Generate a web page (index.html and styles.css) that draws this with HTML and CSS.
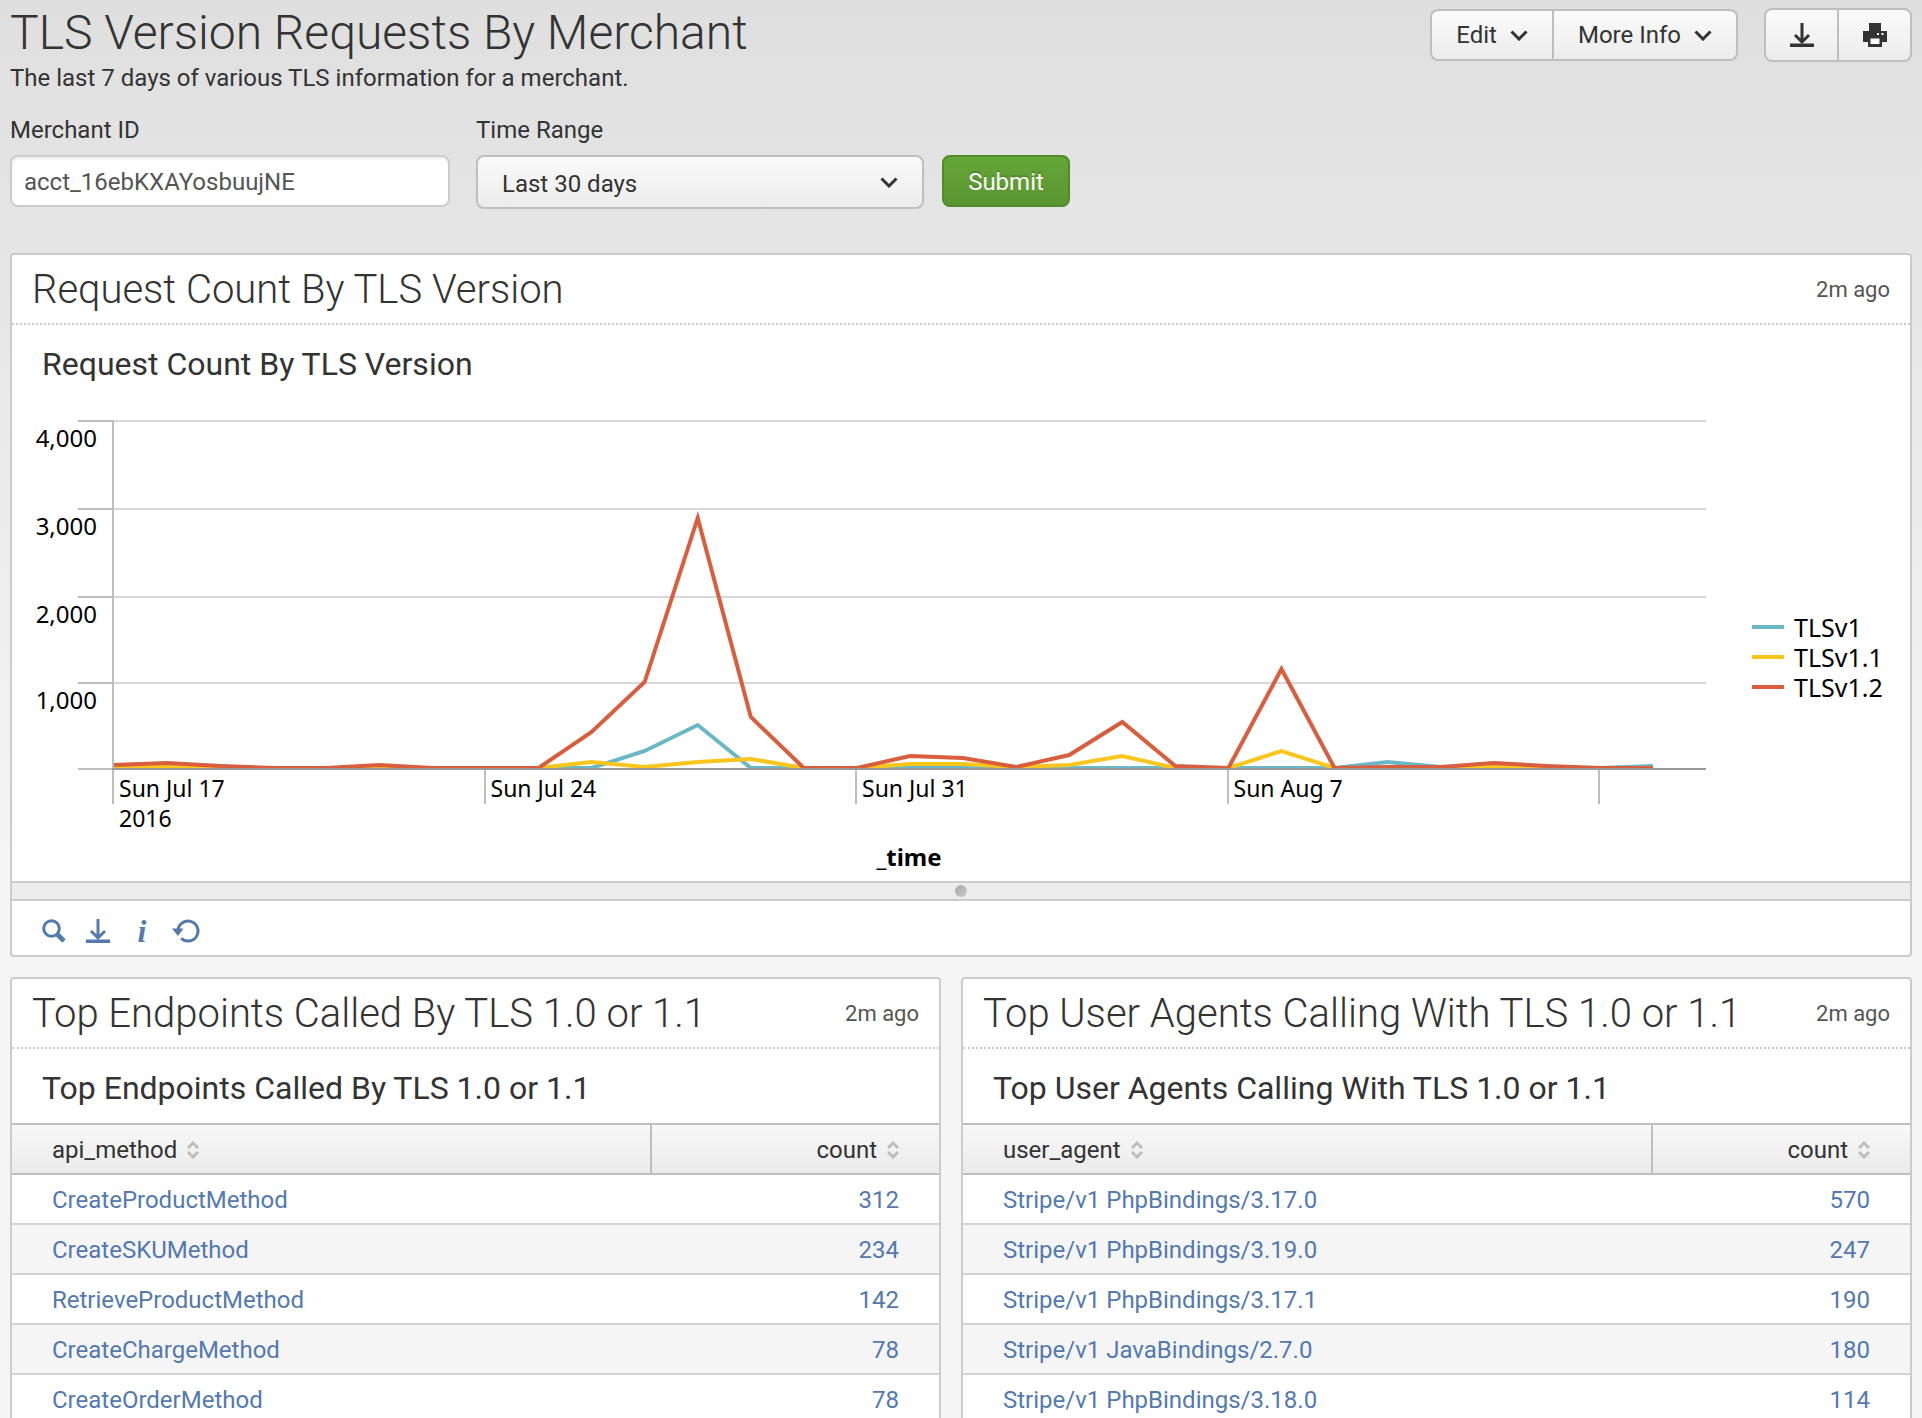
FILE: index.html
```html
<!DOCTYPE html>
<html lang="en">
<head>
<meta charset="utf-8">
<title>TLS Version Requests By Merchant</title>
<link rel="stylesheet" href="styles.css">
</head>
<body>
<svg class="sprite" aria-hidden="true">
  <symbol id="chevron" viewBox="0 0 18 11"><path d="M1.500 1.500 9 9 16.500 1.500" fill="none" stroke="currentColor" stroke-width="3"/></symbol>
  <symbol id="download" viewBox="0 0 24 24"><path d="M12 0v19M5 12l7 7 7-7" fill="none" stroke="currentColor" stroke-width="3"/><path d="M0 20.500h24V24H0z" fill="currentColor"/></symbol>
  <symbol id="sort" viewBox="0 0 12 18"><path d="M1 7l5-5 5 5M1 11l5 5 5-5" fill="none" stroke="currentColor" stroke-width="3"/></symbol>
</svg>

<main class="dashboard">
  <header class="page-header">
    <div>
      <h1 class="page-title">TLS Version Requests By Merchant</h1>
      <p class="page-description">The last 7 days of various TLS information for a merchant.</p>
    </div>
    <div class="actions">
      <div class="button-group">
        <button type="button" class="button">Edit <svg class="chevron"><use href="#chevron"/></svg></button>
        <button type="button" class="button">More Info <svg class="chevron"><use href="#chevron"/></svg></button>
      </div>
      <div class="button-group">
        <button type="button" class="button button-icon" aria-label="Export"><svg class="icon"><use href="#download"/></svg></button>
        <button type="button" class="button button-icon" aria-label="Print">
          <svg class="icon" viewBox="0 0 24 24"><path d="M6 0h12v8h6v11h-5v5H5v-5H0V8h6z" fill="#333"/><path d="M7.500 15.500h9v5.500h-9zM14 10h2v2h-2zM18.500 10h2v2h-2z" fill="#fff"/></svg>
        </button>
      </div>
    </div>
  </header>

  <form class="filters">
    <div class="field field-text">
      <label class="label" for="merchant">Merchant ID</label>
      <input class="text-input" id="merchant" type="text" value="acct_16ebKXAYosbuujNE" spellcheck="false">
    </div>
    <div class="field field-select">
      <label class="label" for="range">Time Range</label>
      <div class="select-wrap">
        <select class="select" id="range"><option>Last 30 days</option><option>Last 7 days</option></select>
        <svg class="chevron select-chevron"><use href="#chevron"/></svg>
      </div>
    </div>
    <button type="submit" class="submit">Submit</button>
  </form>

  <section class="panel">
    <header class="panel-header">
      <h2 class="panel-title">Request Count By TLS Version</h2>
      <span class="age">2m ago</span>
    </header>
    <h3 class="element-title">Request Count By TLS Version</h3>
    <div class="chart">
      <div class="y-axis">
        <span class="y-label">4,000</span>
        <span class="y-label">3,000</span>
        <span class="y-label">2,000</span>
        <span class="y-label">1,000</span>
      </div>
      <svg class="plot" viewBox="0 0 30 348" preserveAspectRatio="none">
        <path class="gridline" d="M0 1H30M0 89H30M0 177H30M0 263H30"/>
        <polyline class="series series-v1" points="0,348 9,348 10,331 11,305 12,348 23,348 24,342 25,347 28,348 29,346"/>
        <polyline class="series series-v11" points="0,347 1,347 2,348 8,348 9,342 10,347 11,342 12,339 13,348 14,348 15,344 16,344 17,347 18,345 19,336 20,348 21,348 22,331 23,348 25,348 26,347 27,348 29,348"/>
        <polyline class="series series-v12" points="0,345 1,343 2,346 3,348 4,348 5,345 6,348 8,348 9,312 10,262 11,98 12,297 13,348 14,348 15,336 16,338 17,347 18,335 19,302 20,346 21,348 22,249 23,348 24,347 25,347 26,343 27,346 28,348 29,348"/>
      </svg>
      <div class="x-origin"></div>
      <div class="x-axis">
        <span class="x-label">Sun Jul 17<br>2016</span>
        <span class="x-label">Sun Jul 24</span>
        <span class="x-label">Sun Jul 31</span>
        <span class="x-label">Sun Aug 7</span>
        <span class="x-label"></span>
      </div>
      <div class="x-title">_time</div>
      <ul class="legend">
        <li class="legend-item"><span class="swatch swatch-v1"></span>TLSv1</li>
        <li class="legend-item"><span class="swatch swatch-v11"></span>TLSv1.1</li>
        <li class="legend-item"><span class="swatch swatch-v12"></span>TLSv1.2</li>
      </ul>
    </div>
    <div class="resizer"><span class="grip"></span></div>
    <footer class="panel-tools">
      <button type="button" class="tool" aria-label="Open in search"><svg class="icon" viewBox="0 0 24 24"><circle cx="9.500" cy="9.500" r="7.800" fill="none" stroke="currentColor" stroke-width="3"/><path d="M15.500 15.500l6.500 6.500" stroke="currentColor" stroke-width="4.600"/></svg></button>
      <button type="button" class="tool" aria-label="Export"><svg class="icon"><use href="#download"/></svg></button>
      <button type="button" class="tool tool-info" aria-label="Inspect">i</button>
      <button type="button" class="tool" aria-label="Refresh"><svg class="icon icon-wide" viewBox="0 0 28 24"><path d="M6 12a10 10 0 1 1 3.200 7.400" fill="none" stroke="currentColor" stroke-width="3"/><path d="M0 9.500h11.500L6 17z" fill="currentColor"/></svg></button>
    </footer>
  </section>

  <div class="panel-row">
    <section class="panel">
      <header class="panel-header">
        <h2 class="panel-title">Top Endpoints Called By TLS 1.0 or 1.1</h2>
        <span class="age">2m ago</span>
      </header>
      <h3 class="element-title">Top Endpoints Called By TLS 1.0 or 1.1</h3>
      <table class="results">
        <thead>
          <tr>
            <th><button type="button" class="sort">api_method <svg class="sort-icon"><use href="#sort"/></svg></button></th>
            <th class="count count-endpoints"><button type="button" class="sort">count <svg class="sort-icon"><use href="#sort"/></svg></button></th>
          </tr>
        </thead>
        <tbody>
          <tr><td><a href="#">CreateProductMethod</a></td><td class="count"><a href="#">312</a></td></tr>
          <tr><td><a href="#">CreateSKUMethod</a></td><td class="count"><a href="#">234</a></td></tr>
          <tr><td><a href="#">RetrieveProductMethod</a></td><td class="count"><a href="#">142</a></td></tr>
          <tr><td><a href="#">CreateChargeMethod</a></td><td class="count"><a href="#">78</a></td></tr>
          <tr><td><a href="#">CreateOrderMethod</a></td><td class="count"><a href="#">78</a></td></tr>
        </tbody>
      </table>
    </section>

    <section class="panel">
      <header class="panel-header">
        <h2 class="panel-title">Top User Agents Calling With TLS 1.0 or 1.1</h2>
        <span class="age">2m ago</span>
      </header>
      <h3 class="element-title">Top User Agents Calling With TLS 1.0 or 1.1</h3>
      <table class="results">
        <thead>
          <tr>
            <th><button type="button" class="sort">user_agent <svg class="sort-icon"><use href="#sort"/></svg></button></th>
            <th class="count count-agents"><button type="button" class="sort">count <svg class="sort-icon"><use href="#sort"/></svg></button></th>
          </tr>
        </thead>
        <tbody>
          <tr><td><a href="#">Stripe/v1 PhpBindings/3.17.0</a></td><td class="count"><a href="#">570</a></td></tr>
          <tr><td><a href="#">Stripe/v1 PhpBindings/3.19.0</a></td><td class="count"><a href="#">247</a></td></tr>
          <tr><td><a href="#">Stripe/v1 PhpBindings/3.17.1</a></td><td class="count"><a href="#">190</a></td></tr>
          <tr><td><a href="#">Stripe/v1 JavaBindings/2.7.0</a></td><td class="count"><a href="#">180</a></td></tr>
          <tr><td><a href="#">Stripe/v1 PhpBindings/3.18.0</a></td><td class="count"><a href="#">114</a></td></tr>
        </tbody>
      </table>
    </section>
  </div>
</main>
</body>
</html>
```
FILE: styles.css
```css
* { box-sizing: border-box; }

body {
  margin: 0;
  color: #333;
  font-family: Roboto, "Liberation Sans", sans-serif;
  font-size: 24px;
  line-height: 32px;
}

h1, h2, h3, p, ul { margin: 0; padding: 0; }
button, input, select { margin: 0; font: inherit; color: inherit; }
button { cursor: pointer; }
svg { display: block; }
.sprite { position: absolute; width: 0; height: 0; }

.dashboard {
  height: 100vh;
  overflow-y: auto;
  scrollbar-width: none;
  padding: 4px 10px 0;
  background: #f5f5f5 linear-gradient(#dfdfdf, #f5f5f5) no-repeat 0 0 / 100% 860px;
}

/* Page header */
.page-header { display: flex; justify-content: space-between; align-items: flex-start; }
.page-title { font-size: 48px; line-height: 58px; font-weight: 300; }
.actions { display: flex; align-items: center; gap: 26px; margin-top: 4px; }
.button-group { display: flex; }

.button {
  display: flex;
  align-items: center;
  gap: 13px;
  height: 52px;
  padding: 0 24px;
  border: 2px solid #bebebe;
  background: linear-gradient(#fafafa, #ececec);
}
.button:first-child { border-radius: 8px 0 0 8px; }
.button:last-child { border-radius: 0 8px 8px 0; }
.button + .button { margin-left: -2px; }
.button-icon { width: 75px; height: 54px; padding: 0; justify-content: center; }
.chevron { width: 18px; height: 11px; }
.icon { width: 24px; height: 24px; }
.icon-wide { width: 28px; }

/* Filters */
.filters { display: flex; align-items: flex-start; margin: 20px 0 44px; }
.field { display: flex; flex-direction: column; gap: 9px; }
.field-text { width: 440px; margin-right: 26px; }
.field-select { width: 448px; margin-right: 18px; }
.text-input {
  width: 100%;
  height: 52px;
  padding: 2px 12px 0;
  border: 2px solid #ccc;
  border-radius: 8px;
  background: #fff;
  box-shadow: inset 0 2px 2px #eee;
  color: #555;
}
.select-wrap { display: grid; align-items: center; }
.select {
  grid-area: 1 / 1;
  height: 54px;
  padding: 3px 24px 0;
  border: 2px solid #bebebe;
  border-radius: 8px;
  background: linear-gradient(#fafafa, #ececec);
  appearance: none;
}
.select-chevron { grid-area: 1 / 1; justify-self: end; margin-right: 26px; pointer-events: none; }
.submit {
  width: 128px;
  height: 52px;
  margin-top: 41px;
  padding: 2px 0 0;
  border: 2px solid #4f8a2b;
  border-radius: 8px;
  background: linear-gradient(#65a637, #5b9632);
  color: #fff;
  text-shadow: 0 -2px 0 #4f8a2b;
}

/* Panels */
.panel { border: 2px solid #ccc; border-radius: 4px; background: #fff; min-width: 0; }
.panel-row { display: grid; grid-template-columns: 931fr 951fr; gap: 20px; margin-top: 20px; }
.panel-header {
  display: flex;
  align-items: center;
  justify-content: space-between;
  height: 70px;
  padding: 2px 20px 0;
  border-bottom: 2px dotted #ccc;
}
.panel-title { font-size: 40px; line-height: 48px; font-weight: 300; }
.age { font-size: 22px; color: #555; white-space: nowrap; }
.element-title { padding: 20px 30px 16px; font-size: 32px; line-height: 38px; font-weight: 400; }

/* Chart */
.chart {
  display: grid;
  grid-template-columns: 100px 1fr 204px;
  padding: 21px 0 9px;
  color: #000;
  font-family: "Noto Sans", sans-serif;
  font-size: 24px;
  line-height: 30px;
}
.y-axis { display: grid; grid-template-rows: 88px 88px 86px 86px; }
.y-label {
  padding: 3px 15px 0 0;
  text-align: right;
  background: linear-gradient(#bebebe, #bebebe) no-repeat 100% 0 / 34px 2px;
}
.plot { width: 100%; height: 348px; border-left: 2px solid #bebebe; }
.gridline { stroke: #d8d8d8; stroke-width: 2; vector-effect: non-scaling-stroke; }
.series { fill: none; stroke-width: 4; stroke-miterlimit: 10; vector-effect: non-scaling-stroke; }
.series-v1 { stroke: #6ab7c7; }
.series-v11 { stroke: #fac51c; }
.series-v12 { stroke: #d85e3d; }
.x-origin { background: linear-gradient(#bebebe, #bebebe) no-repeat 100% 0 / 34px 2px; }
.x-axis {
  display: grid;
  grid-template-columns: repeat(4, 743fr) 216fr;
  border-top: 2px solid #999;
  font-size: 23px;
}
.x-label {
  padding: 3px 0 0 7px;
  background: linear-gradient(#bebebe, #bebebe) no-repeat 0 0 / 2px 34px;
}
.x-title { grid-column: 2; margin-top: 9px; font-weight: 700; text-align: center; }
.legend {
  grid-area: 1 / 3 / 4 / 4;
  align-self: center;
  padding: 22px 0 0 46px;
  list-style: none;
  font-size: 25px;
}
.legend-item { display: flex; align-items: center; gap: 10px; }
.swatch { width: 32px; height: 4px; }
.swatch-v1 { background: #6ab7c7; }
.swatch-v11 { background: #fac51c; }
.swatch-v12 { background: #d85e3d; }

.resizer {
  display: flex;
  align-items: center;
  justify-content: center;
  height: 20px;
  border: solid #ccc;
  border-width: 2px 0;
  background: #ededed;
}
.grip { width: 12px; height: 12px; border-radius: 50%; background: linear-gradient(135deg, #aaa, #c8c8c8); }

.panel-tools { display: flex; padding: 8px 20px 2px; }
.tool {
  display: flex;
  align-items: center;
  justify-content: center;
  width: 44px;
  height: 44px;
  padding: 0;
  border: 0;
  background: none;
  color: #5379af;
}
.tool-info { font-family: "Liberation Serif", serif; font-size: 32px; font-style: italic; font-weight: 700; }

/* Result tables */
.results { width: 100%; border-collapse: separate; border-spacing: 0; table-layout: fixed; }
.results th {
  height: 52px;
  padding: 0 40px;
  border: solid #bebebe;
  border-width: 2px 0;
  background: linear-gradient(#f8f8f8, #ebebeb);
  font-weight: 400;
  text-align: left;
}
.results td { height: 50px; padding: 2px 40px 0; border-bottom: 2px solid #d3d3d3; }
.results tbody tr:nth-child(even) { background: #f5f5f5; }
.results a { color: #5379af; text-decoration: none; }
.results .count { text-align: right; }
.results th.count { border-left-width: 2px; }
.count-endpoints { width: 289px; }
.count-agents { width: 259px; }
.sort { display: inline-flex; align-items: center; gap: 10px; padding: 0; border: 0; background: none; vertical-align: middle; }
.sort-icon { width: 12px; height: 18px; color: #bebebe; }
```
